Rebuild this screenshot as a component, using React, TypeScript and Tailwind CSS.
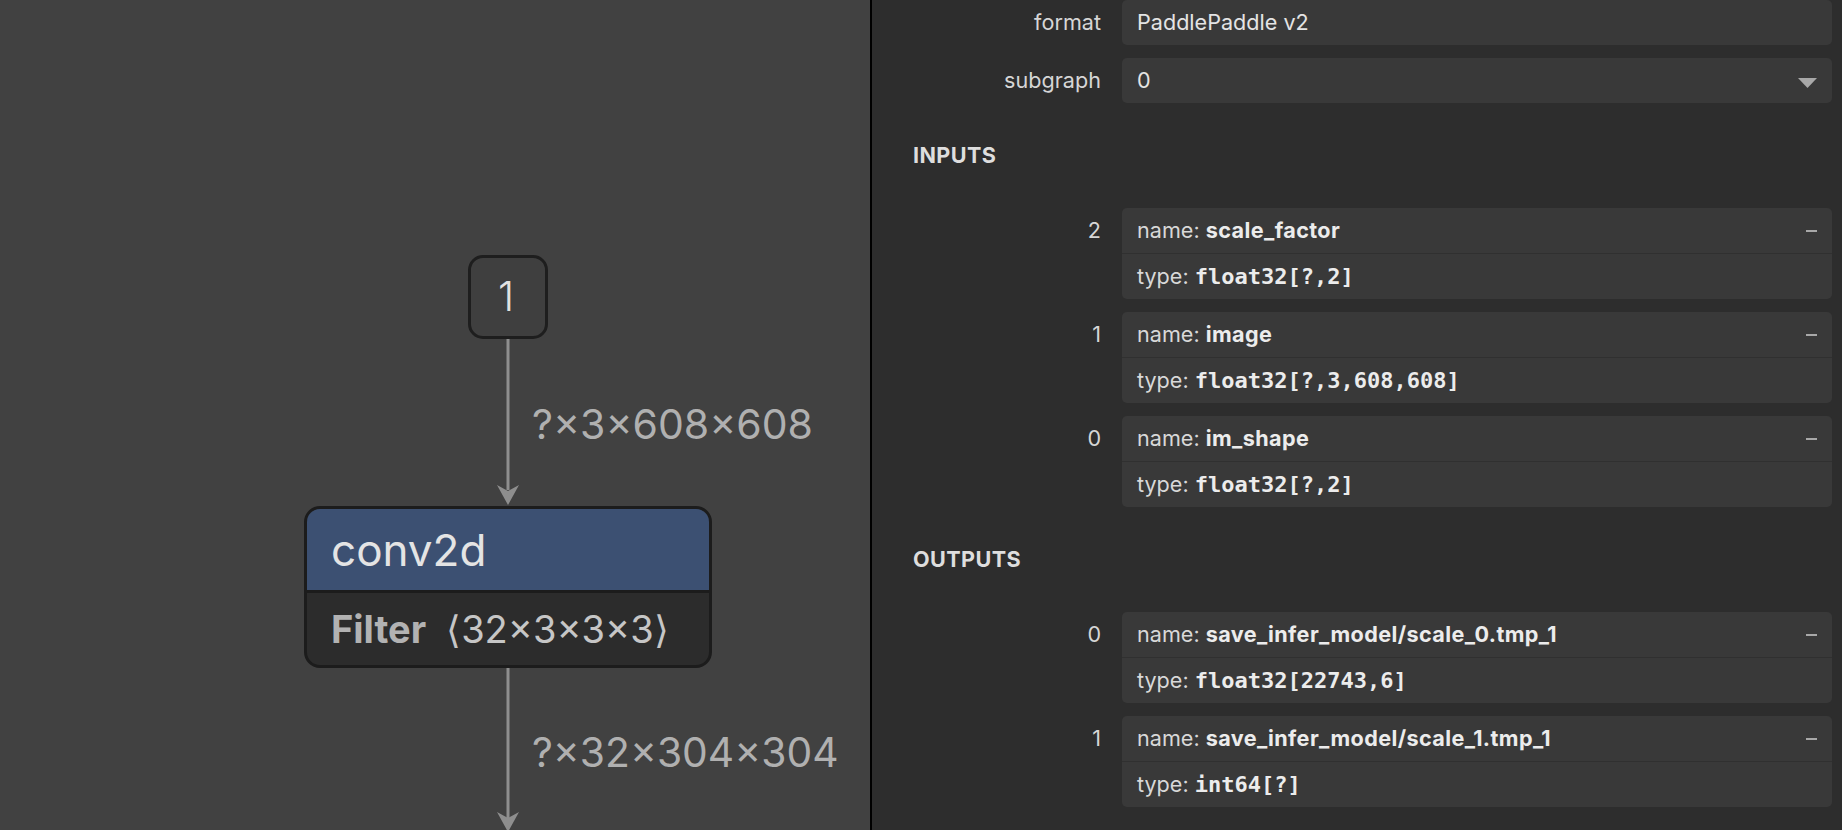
import React from "react";

type Arg = { index: string; name: string; type: string };

const inputs: Arg[] = [
  { index: "2", name: "scale_factor", type: "float32[?,2]" },
  { index: "1", name: "image", type: "float32[?,3,608,608]" },
  { index: "0", name: "im_shape", type: "float32[?,2]" },
];

const outputs: Arg[] = [
  { index: "0", name: "save_infer_model/scale_0.tmp_1", type: "float32[22743,6]" },
  { index: "1", name: "save_infer_model/scale_1.tmp_1", type: "int64[?]" },
];

function Graph() {
  return (
    <div className="relative w-[870px] h-full bg-[#414141] overflow-hidden">
      <svg className="absolute inset-0" width="870" height="830">
        <line x1="508" y1="338" x2="508" y2="490" stroke="#8e8e8e" strokeWidth="3" />
        <polygon points="497,485 508,505 519,485 508,491" fill="#8e8e8e" />
        <line x1="508" y1="668" x2="508" y2="818" stroke="#8e8e8e" strokeWidth="3" />
        <polygon points="497,812 508,832 519,812 508,818" fill="#8e8e8e" />
      </svg>

      {/* input node */}
      <div className="absolute left-[468px] top-[255px] w-[80px] h-[84px] rounded-[15px] border-[3px] border-[#1e1e1e] bg-[#3f3f3f] flex items-center justify-center pr-[4px] text-[41px] font-light text-[#e2e2e2]">
        1
      </div>

      <div className="absolute left-[532px] top-[398px] text-[41px] leading-[52px] text-[#b0b0b0] whitespace-nowrap">
        ?×3×608×608
      </div>

      {/* conv2d node */}
      <div className="absolute left-[304px] top-[506px] w-[408px] rounded-[16px] border-[3px] border-[#1c1c1c] bg-[#2c2c2c] overflow-hidden">
        <div className="h-[81px] bg-[#3c5072] flex items-center pl-[24px] text-[44px] text-[#e4e4e4]">
          conv2d
        </div>
        <div className="h-[75px] border-t-[3px] border-[#1c1c1c] flex items-center pl-[24px] text-[38px] whitespace-nowrap">
          <span className="font-bold text-[#b2b2b2]">Filter</span>
          <span className="ml-[20px] text-[#c6c6c6]">⟨32×3×3×3⟩</span>
        </div>
      </div>

      <div className="absolute left-[532px] top-[726px] text-[40.8px] leading-[52px] text-[#b0b0b0] whitespace-nowrap">
        ?×32×304×304
      </div>
    </div>
  );
}

function Minus() {
  return <div className="w-[11px] h-[2px] bg-[#a8a8a8]" />;
}

function Row({ label, children }: { label: string; children: React.ReactNode }) {
  return (
    <div className="grid grid-cols-[229px_1fr] gap-x-[21px]">
      <div className="h-[45px] flex items-center justify-end text-[#d6d6d6]">{label}</div>
      {children}
    </div>
  );
}

function ArgumentItem({ arg }: { arg: Arg }) {
  return (
    <Row label={arg.index}>
      <div className="rounded-[5px] overflow-hidden bg-[#393939]">
        <div className="h-[45px] flex items-center justify-between pl-[15px] pr-[15px]">
          <div className="whitespace-nowrap">
            <span className="text-[#d8d8d8]">name: </span>
            <span className="font-bold tracking-[0.4px] text-[#ececec]">{arg.name}</span>
          </div>
          <Minus />
        </div>
        <div className="h-[46px] border-t border-[#303030] flex items-center pl-[15px]">
          <span className="text-[#d8d8d8]">type:&nbsp;</span>
          <span className="font-['DejaVu_Sans_Mono',monospace] text-[22px] font-bold text-[#ececec]">{arg.type}</span>
        </div>
      </div>
    </Row>
  );
}

function SectionHeader({ title }: { title: string }) {
  return (
    <div className="h-[105px] flex items-center pl-[41px] font-bold tracking-[0.4px] text-[#dedede]">
      {title}
    </div>
  );
}

function Sidebar() {
  return (
    <div className="flex-1 h-full bg-[#2d2d2d] pr-[10px] overflow-hidden">
      <Row label="format">
        <div className="h-[45px] rounded-[5px] bg-[#393939] flex items-center pl-[15px] text-[#e4e4e4]">
          PaddlePaddle v2
        </div>
      </Row>
      <div className="mt-[13px]">
        <Row label="subgraph">
          <div className="h-[45px] rounded-[5px] bg-[#393939] flex items-center justify-between pl-[15px] pr-[15px] text-[#e4e4e4]">
            <span>0</span>
            <svg width="19" height="11" viewBox="0 0 19 11" className="mt-[5px]">
              <polygon points="0,0 19,0 9.5,10" fill="#a8a8a8" />
            </svg>
          </div>
        </Row>
      </div>
      <SectionHeader title="INPUTS" />
      <div className="flex flex-col gap-[13px]">
        {inputs.map((a) => (
          <ArgumentItem key={a.index} arg={a} />
        ))}
      </div>
      <SectionHeader title="OUTPUTS" />
      <div className="flex flex-col gap-[13px]">
        {outputs.map((a) => (
          <ArgumentItem key={a.index} arg={a} />
        ))}
      </div>
    </div>
  );
}

export default function App() {
  return (
    <div className="flex w-[1842px] h-[830px] overflow-hidden font-['Inter','Noto_Sans',sans-serif] text-[21.6px]">
      <Graph />
      <div className="w-[2px] h-full bg-black" />
      <Sidebar />
    </div>
  );
}
